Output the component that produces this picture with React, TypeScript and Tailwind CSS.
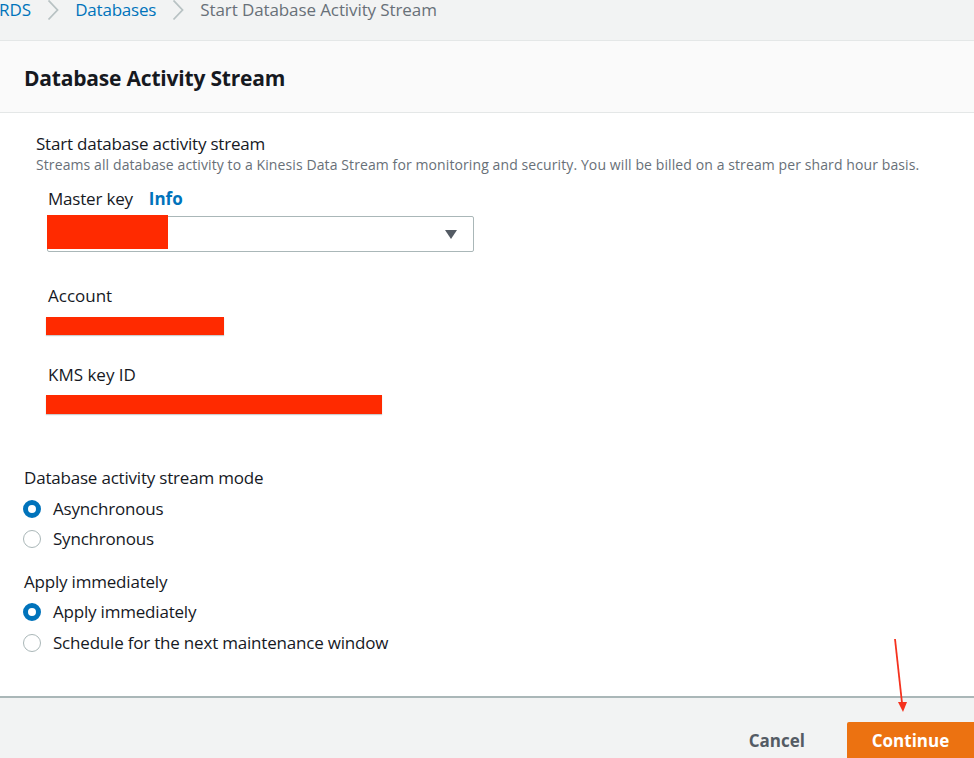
import React from "react";

function Radio({ checked, label }: { checked: boolean; label: string }) {
  return (
    <div className="flex items-center h-[30px]">
      {checked ? (
        <span className="w-[18px] h-[18px] rounded-full border-[5px] border-[#0073bb] bg-white box-border -ml-[1px]" />
      ) : (
        <span className="w-[18px] h-[18px] rounded-full border-[1.5px] border-[#aab7b8] bg-white box-border -ml-[1px]" />
      )}
      <span className="ml-[12px] text-[17px] text-[#16191f] tracking-[-0.2px]">{label}</span>
    </div>
  );
}

function Chevron() {
  return (
    <svg width="12" height="22" viewBox="0 0 12 22" className="mx-[16px]">
      <path d="M1.5 1.5 L10.5 11 L1.5 20.5" fill="none" stroke="#b8c2c3" strokeWidth="1.8" />
    </svg>
  );
}

export default function App() {
  return (
    <div
      className="relative w-[974px] h-[758px] overflow-hidden bg-white text-[#16191f]"
      style={{ fontFamily: '"Open Sans", "Noto Sans", sans-serif' }}
    >
      {/* breadcrumb */}
      <div className="h-[41px] bg-[#f2f3f3] border-b border-[#e4e7e7]">
        <div className="flex items-center h-[20px] text-[17px] leading-[20px]">
          <span className="text-[#0073bb] -ml-[1px]">RDS</span>
          <Chevron />
          <span className="text-[#0073bb] tracking-[-0.2px]">Databases</span>
          <Chevron />
          <span className="text-[#687078] tracking-[-0.1px]">Start Database Activity Stream</span>
        </div>
      </div>

      {/* header */}
      <div className="h-[72px] bg-[#fafafa] border-b border-[#e4e7e7] flex items-center pl-[24px] pt-[4px]">
        <h1 className="text-[21px] font-bold text-[#16191f] tracking-[-0.2px]">Database Activity Stream</h1>
      </div>

      {/* content */}
      <div className="pt-[20px]">
        <div className="pl-[36px]">
          <div className="text-[17px] leading-[22px] tracking-[-0.2px]">Start database activity stream</div>
          <div className="text-[14px] leading-[22px] text-[#687078] mt-[-1px] tracking-[0.1px]">
            Streams all database activity to a Kinesis Data Stream for monitoring and security. You will be billed on a stream per shard hour basis.
          </div>
        </div>

        <div className="pl-[47px] mt-[12px]">
          <div className="flex items-center h-[22px] text-[17px]">
            <span className="ml-[1px] tracking-[-0.2px]">Master key</span>
            <span className="ml-[16px] font-bold text-[#0073bb]">Info</span>
          </div>
          <div className="relative mt-[6px] w-[427px] h-[36px] border border-[#aab7b8] rounded-[2px] bg-white">
            <div className="absolute left-[-1px] top-[-2px] w-[121px] h-[34px] bg-[#ff2a00]" />
            <svg width="12" height="10" viewBox="0 0 12 10" className="absolute right-[16px] top-[13px]">
              <path d="M0 0 H12 L6 9 Z" fill="#545b64" />
            </svg>
          </div>
        </div>

        <div className="pl-[46px] mt-[33px]">
          <div className="text-[17px] leading-[22px] ml-[2px]">Account</div>
          <div className="mt-[10px] w-[178px] h-[18px] bg-[#ff2a00] shadow-[0_1px_1px_rgba(0,0,0,0.2)]" />
        </div>

        <div className="pl-[46px] mt-[29px]">
          <div className="text-[17px] leading-[22px] ml-[2px]">KMS key ID</div>
          <div className="mt-[9px] w-[336px] h-[19px] bg-[#ff2a00] shadow-[0_1px_1px_rgba(0,0,0,0.2)]" />
        </div>

        <div className="pl-[24px] mt-[53px]">
          <div className="text-[17px] leading-[22px] tracking-[-0.2px]">Database activity stream mode</div>
          <div className="mt-[5px]">
            <Radio checked label="Asynchronous" />
            <Radio checked={false} label="Synchronous" />
          </div>
          <div className="text-[17px] leading-[22px] mt-[17px] tracking-[-0.2px]">Apply immediately</div>
          <div className="mt-[4px] flex flex-col gap-[1px]">
            <Radio checked label="Apply immediately" />
            <Radio checked={false} label="Schedule for the next maintenance window" />
          </div>
        </div>
      </div>

      {/* footer */}
      <div className="absolute left-0 right-0 top-[696px] bottom-0 bg-[#f2f3f3] border-t-[2px] border-[#aab7b8]">
        <div className="flex justify-end items-start pt-[24px]">
          <span className="mt-[6px] mr-[42px] text-[17px] font-bold text-[#545b64]">Cancel</span>
          <div className="w-[127px] h-[40px] bg-[#ec7211] rounded-tl-[2px] flex items-center justify-center text-[17px] font-bold text-white pb-[2px]">
            Continue
          </div>
        </div>
      </div>

      {/* annotation arrow */}
      <svg className="absolute left-[885px] top-[635px]" width="30" height="85" viewBox="0 0 30 85">
        <path d="M10 4 L17 68" stroke="#f5321e" strokeWidth="1.8" fill="none" />
        <path d="M13 67 L22 67 L18 77 Z" fill="#f5321e" />
      </svg>
    </div>
  );
}
